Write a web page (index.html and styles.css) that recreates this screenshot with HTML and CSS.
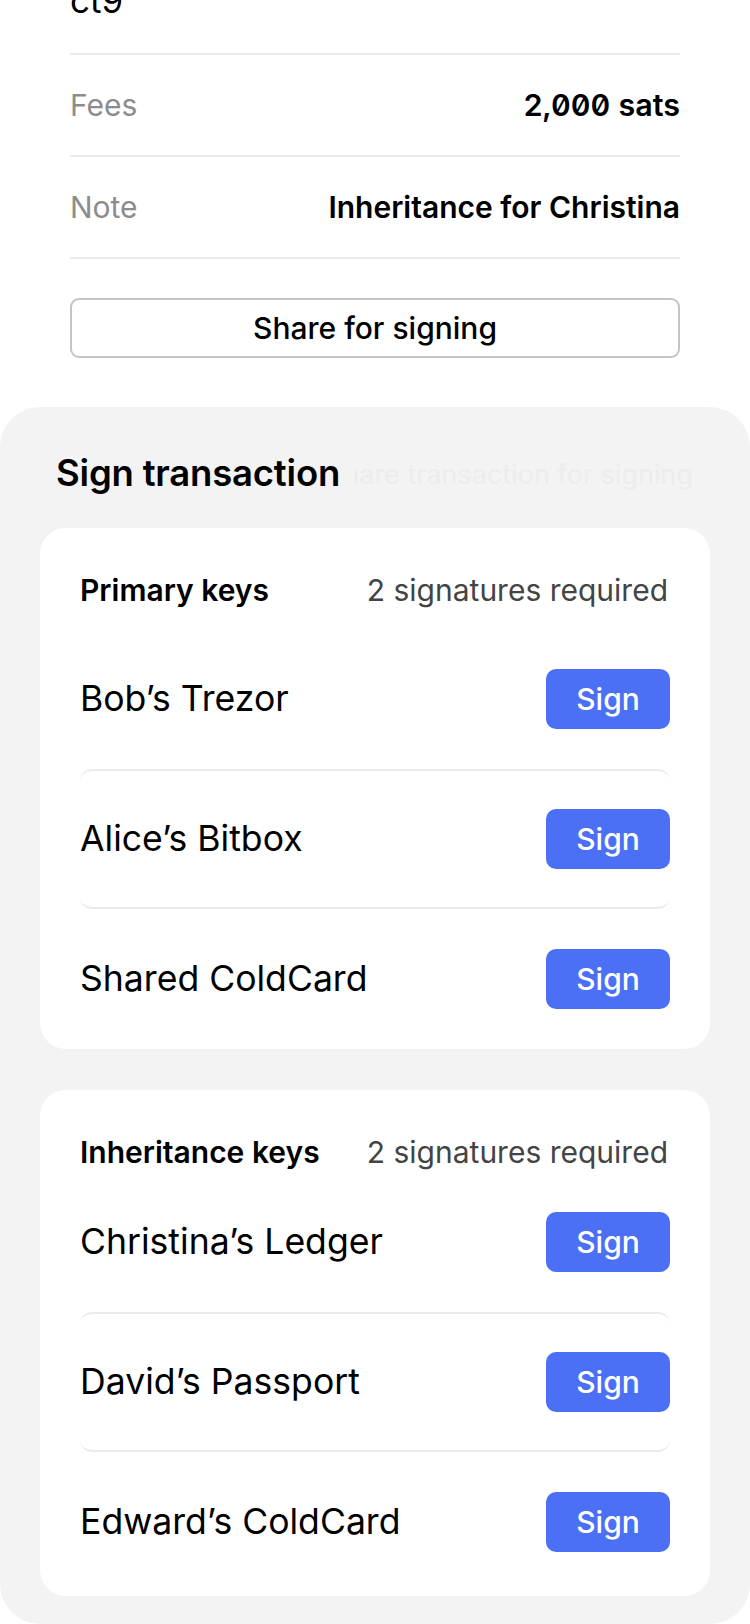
FILE: index.html
```html
<!DOCTYPE html>
<html>
<head>
<meta charset="utf-8">
<link rel="stylesheet" href="styles.css">
</head>
<body>
<div class="page">
  <section class="details">
    <div class="addr">ct9</div>
    <div class="detail-row">
      <span class="label">Fees</span>
      <span class="value num">2,000 sats</span>
    </div>
    <div class="detail-row">
      <span class="label">Note</span>
      <span class="value">Inheritance for Christina</span>
    </div>
    <button class="share-btn">Share for signing</button>
  </section>

  <section class="panel">
    <div class="panel-title">
      <span class="ghost">Share transaction for signing</span>
      <h2 class="title">Sign transaction</h2>
    </div>

    <div class="card">
      <div class="card-head card-head--primary">
        <span class="group">Primary keys</span>
        <span class="req">2 signatures required</span>
      </div>
      <div class="key-row">
        <span class="key-name">Bob’s Trezor</span>
        <button class="sign-btn">Sign</button>
      </div>
      <div class="key-row key-row--mid">
        <span class="key-name">Alice’s Bitbox</span>
        <button class="sign-btn">Sign</button>
      </div>
      <div class="key-row">
        <span class="key-name">Shared ColdCard</span>
        <button class="sign-btn">Sign</button>
      </div>
    </div>

    <div class="card card--second">
      <div class="card-head">
        <span class="group">Inheritance keys</span>
        <span class="req">2 signatures required</span>
      </div>
      <div class="key-row">
        <span class="key-name">Christina’s Ledger</span>
        <button class="sign-btn">Sign</button>
      </div>
      <div class="key-row key-row--mid">
        <span class="key-name">David’s Passport</span>
        <button class="sign-btn">Sign</button>
      </div>
      <div class="key-row">
        <span class="key-name">Edward’s ColdCard</span>
        <button class="sign-btn">Sign</button>
      </div>
    </div>
  </section>
</div>
</body>
</html>
```

FILE: styles.css
```css
* { box-sizing: border-box; }

html, body {
  margin: 0;
  padding: 0;
  background: #ffffff;
}

body {
  font-family: Inter, "Noto Sans", "Liberation Sans", sans-serif;
  color: #000;
  overflow: hidden;
}

.page {
  width: 750px;
}

.details {
  padding: 0 70px;
}

.addr {
  margin-top: -20px;
  font-size: 35px;
  line-height: 40px;
  padding-bottom: 33px;
  border-bottom: 2px solid #ebebeb;
}

.detail-row {
  display: flex;
  justify-content: space-between;
  align-items: center;
  padding: 32px 0;
  line-height: 36px;
  border-bottom: 2px solid #ebebeb;
}

.label {
  font-size: 30px;
  color: #8c8c8c;
}

.value {
  font-size: 30px;
  font-weight: 600;
}

.num {
  font-size: 30.5px;
  font-feature-settings: "zero" 1, "tnum" 1;
}

.share-btn {
  display: block;
  width: 100%;
  height: 60px;
  margin-top: 39px;
  border: 2px solid #c4c4c4;
  border-radius: 9px;
  background: #fff;
  font-family: inherit;
  font-size: 30px;
  font-weight: 500;
  color: #000;
}

.panel {
  margin-top: 49px;
  background: #f3f3f3;
  border-radius: 40px;
  padding: 44px 0 28px;
}

.panel-title {
  position: relative;
  padding: 0 56px;
  margin-bottom: 33px;
}

.ghost {
  position: absolute;
  right: 57px;
  top: 2px;
  font-size: 27px;
  line-height: 44px;
  font-weight: 400;
  color: #ececec;
  white-space: nowrap;
}

.title {
  position: relative;
  display: inline-block;
  margin: 0;
  padding-right: 14px;
  background: #f3f3f3;
  font-size: 36.5px;
  line-height: 44px;
  font-weight: 600;
  letter-spacing: -0.2px;
}

.card {
  margin: 0 40px;
  background: #fff;
  border-radius: 26px;
  padding: 42px 40px 0;
}

.card--second {
  margin-top: 41px;
  padding-bottom: 4px;
}

.card-head {
  display: flex;
  justify-content: space-between;
  align-items: center;
  line-height: 40px;
}

.card-head--primary {
  margin-bottom: 19px;
}

.group {
  font-size: 30px;
  font-weight: 600;
}

.req {
  font-size: 30px;
  color: #444;
  padding-right: 2px;
}

.key-row {
  display: flex;
  justify-content: space-between;
  align-items: center;
  padding: 40px 0;
}

.key-row--mid {
  padding: 38px 0;
  border-top: 2px solid #ebebeb;
  border-bottom: 2px solid #ebebeb;
  border-radius: 12px;
}

.key-name {
  font-size: 35.6px;
  line-height: 40px;
}

.sign-btn {
  width: 124px;
  height: 60px;
  border: none;
  border-radius: 10px;
  background: #4b70f5;
  color: #fff;
  font-family: inherit;
  font-size: 30px;
  font-weight: 500;
  padding: 0;
}
```
